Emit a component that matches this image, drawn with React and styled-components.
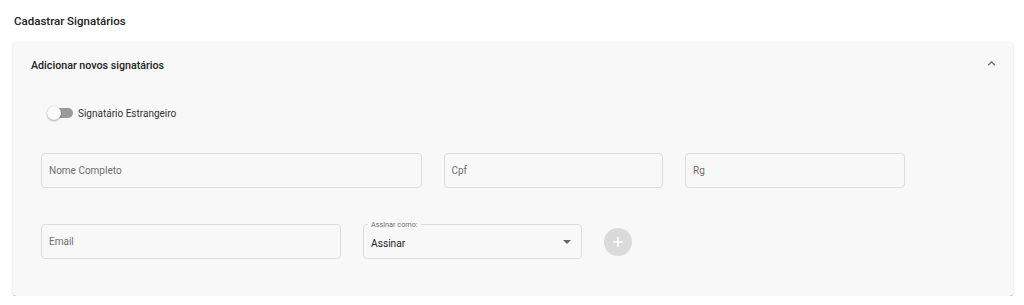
import React from "react";
import styled, { createGlobalStyle } from "styled-components";

const Global = createGlobalStyle`
  html, body { margin: 0; padding: 0; background: #fff; }
  body { font-family: Roboto, "Liberation Sans", sans-serif; color: #212121; }
  * { box-sizing: border-box; }
`;

const Page = styled.div`
  padding: 14px 11px 0 13px;
`;

const Title = styled.h2`
  margin: 0 0 0 1px;
  font-size: 11.5px;
  font-weight: 500;
  line-height: 14px;
  color: #212121;
`;

const Card = styled.section`
  margin-top: 14px;
  background: #f8f8f8;
  border-radius: 4px;
  box-shadow: 0 2px 1px -1px rgba(0,0,0,0.2), 0 1px 1px 0 rgba(0,0,0,0.14), 0 1px 3px 0 rgba(0,0,0,0.12);
  padding-bottom: 37px;
`;

const CardHeader = styled.div`
  display: flex;
  align-items: center;
  justify-content: space-between;
  height: 46px;
  padding: 0 14px 0 18px;
`;

const CardTitle = styled.span`
  font-size: 10.7px;
  font-weight: 500;
  color: #212121;
`;

const Chevron = styled.svg`
  width: 15px;
  height: 15px;
  margin-top: -3px;
`;

const SwitchRow = styled.label`
  display: flex;
  align-items: center;
  gap: 5px;
  margin: 18px 0 0 34px;
  font-size: 10px;
  color: #333;
`;

const Switch = styled.span`
  position: relative;
  display: inline-block;
  width: 26px;
  height: 14px;
`;

const Track = styled.span`
  position: absolute;
  left: 2px;
  right: 0;
  top: 2px;
  height: 10px;
  border-radius: 5px;
  background: #9a9a9a;
`;

const Thumb = styled.span`
  position: absolute;
  left: 0;
  top: 0;
  width: 14px;
  height: 14px;
  border-radius: 50%;
  background: #fafafa;
  box-shadow: 0 1px 2px rgba(0,0,0,0.3), 0 0 1px rgba(0,0,0,0.2);
`;

const Grid = styled.div`
  display: flex;
  flex-wrap: wrap;
  align-items: center;
  width: 966px;
  margin-left: 6px;
  margin-top: ${p => p.$mt}px;
`;

const Item = styled.div`
  flex: 0 0 ${p => (p.$cols / 12) * 100}%;
  padding-left: 22px;
  display: flex;
`;

const Field = styled.div`
  position: relative;
  width: 100%;
  height: 35px;
  border: 1px solid #dcdcdc;
  border-radius: 4px;
  display: flex;
  align-items: center;
  padding: 0 7px;
  font-size: 10px;
  color: ${p => (p.$filled ? "#222" : "#6f6f6f")};
  ${p => p.$filled && "font-size: 10.2px; padding-top: 4px;"}
`;

const FloatLabel = styled.span`
  position: absolute;
  top: -5px;
  left: 4px;
  padding: 0 3px;
  background: #f8f8f8;
  font-size: 7.3px;
  line-height: 9px;
  color: #6f6f6f;
`;

const Caret = styled.span`
  position: absolute;
  right: 10px;
  top: 15px;
  width: 0;
  height: 0;
  border-left: 4px solid transparent;
  border-right: 4px solid transparent;
  border-top: 4px solid #666;
`;

const AddButton = styled.button`
  width: 28px;
  height: 28px;
  border-radius: 50%;
  border: none;
  background: #dadada;
  display: flex;
  align-items: center;
  justify-content: center;
  padding: 0;
`;

export default function App() {
  return (
    <>
      <Global />
      <Page>
        <Title>Cadastrar Signatários</Title>
        <Card>
          <CardHeader>
            <CardTitle>Adicionar novos signatários</CardTitle>
            <Chevron viewBox="0 0 24 24">
              <path d="M7.41 15.41 12 10.83l4.59 4.58L18 14l-6-6-6 6z" fill="#666" />
            </Chevron>
          </CardHeader>
          <SwitchRow>
            <Switch>
              <Track />
              <Thumb />
            </Switch>
            Signatário Estrangeiro
          </SwitchRow>
          <Grid $mt={33}>
            <Item $cols={5}><Field>Nome Completo</Field></Item>
            <Item $cols={3}><Field>Cpf</Field></Item>
            <Item $cols={3}><Field>Rg</Field></Item>
          </Grid>
          <Grid $mt={36}>
            <Item $cols={4}><Field>Email</Field></Item>
            <Item $cols={3}>
              <Field $filled>
                <FloatLabel>Assinar como:</FloatLabel>
                Assinar
                <Caret />
              </Field>
            </Item>
            <Item $cols={1}>
              <AddButton aria-label="Adicionar">
                <svg width="12" height="12" viewBox="0 0 12 12">
                  <path d="M6 1v10M1 6h10" stroke="#fff" strokeWidth="1.6" />
                </svg>
              </AddButton>
            </Item>
          </Grid>
        </Card>
      </Page>
    </>
  );
}
